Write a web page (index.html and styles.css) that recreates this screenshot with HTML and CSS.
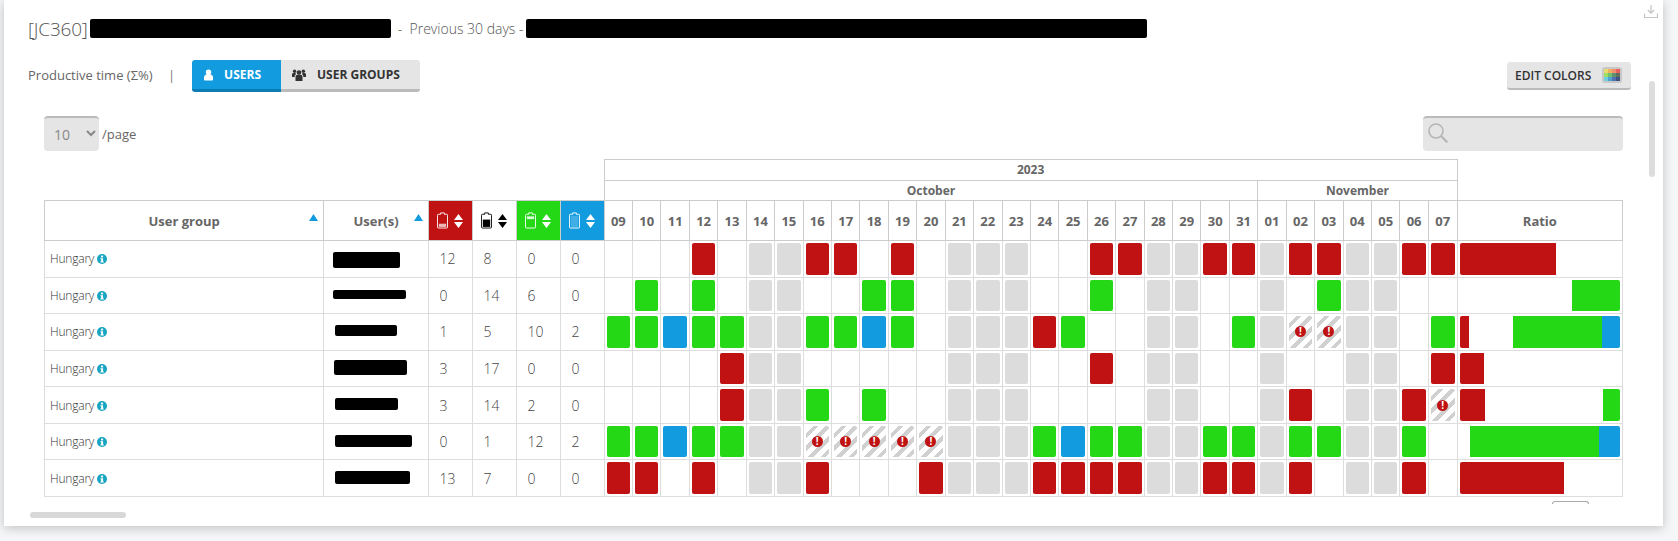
FILE: index.html
```html
<!DOCTYPE html>
<html lang="en">
  <head>
    <meta charset="UTF-8" />
    <title>Productive time</title>
    <link rel="stylesheet" href="styles.css">
  </head>
  <body>
    <svg class="defs" aria-hidden="true">
      <symbol id="info" viewBox="0 0 10 10">
        <circle cx="5" cy="5" r="5" fill="#17a5c2" />
        <rect x="4" y="1.6" width="2.1" height="1.8" fill="#fff" />
        <path d="M3.4 4.2h2.7v3.2h.7v1H3.4v-1h.7V5.200h-.7z" fill="#fff" />
      </symbol>
      <symbol id="sort" viewBox="0 0 9 14">
        <path d="M4.500 0L9 6H0zM4.500 14L0 8h9z" fill="currentColor" />
      </symbol>
      <symbol id="asc" viewBox="0 0 9 7">
        <path d="M4.500 0L9 7H0z" fill="#129cdf" />
      </symbol>
    </svg>

    <main class="card">
      <svg class="download" viewBox="0 0 14 13" aria-hidden="true">
        <path d="M7 0v8M3.800 5L7 8.200 10.200 5M.5 8.500v4h13v-4" fill="none" stroke="#c4c4c4" stroke-width="1.200" />
      </svg>
      <div class="vscroll"></div>

      <h1 class="title">
        <span class="code">[JC360]</span><span class="redact name"></span>
        <span class="period">- &nbsp;Previous 30 days -</span><span class="redact scope"></span>
      </h1>

      <div class="controls">
        <span class="metric">Productive time (&Sigma;%)</span>
        <span class="pipe">|</span>
        <div class="switch">
          <button class="tab active">
            <svg viewBox="0 0 10 12" aria-hidden="true"><path d="M5 0a3 3 0 0 1 3 3 3 3 0 0 1-1 2.400c2 .3 3 1.600 3 3.600v2a1 1 0 0 1-1 1H1a1 1 0 0 1-1-1V9c0-2 1-3.300 3-3.600A3 3 0 0 1 2 3a3 3 0 0 1 3-3z" fill="#fff" /></svg>
            USERS
          </button>
          <button class="tab">
            <svg viewBox="0 0 14 12" aria-hidden="true"><g fill="#333"><circle cx="7" cy="3.500" r="2.300" /><circle cx="2.600" cy="2.300" r="1.700" /><circle cx="11.400" cy="2.300" r="1.700" /><path d="M3.500 8c0-1.500 1-2.300 2-2.300h3c1 0 2 .8 2 2.300v4h-7zM0 5.500c0-1 .7-1.500 1.500-1.500h2L4 5.200C3 5.700 2.700 6.600 2.700 8H0zM14 5.500c0-1-.7-1.500-1.500-1.500h-2L10 5.200c1 .5 1.300 1.400 1.300 2.800H14z" /></g></svg>
            USER GROUPS
          </button>
        </div>
        <button class="edit-colors">
          EDIT COLORS
          <span class="palette">
            <i class="p1"></i><i class="p2"></i><i class="p3"></i><i class="p4"></i>
            <i class="p5"></i><i class="p6"></i><i class="p7"></i><i class="p8"></i>
            <i class="p9"></i><i class="p10"></i><i class="p11"></i><i class="p12"></i>
          </span>
        </button>
      </div>

      <div class="content">
        <div class="tools">
          <select class="page-size"><option>10</option></select>
          <span class="per-page">/page</span>
          <div class="search">
            <svg viewBox="0 0 20 20" aria-hidden="true"><circle cx="8" cy="8" r="7" fill="none" stroke="#b4b4b4" stroke-width="1.500" /><path d="M13 13l6.300 6.300" stroke="#b4b4b4" stroke-width="2" /></svg>
            <input type="text" aria-label="Search" />
          </div>
        </div>

        <table class="report">
          <colgroup>
            <col class="col-group" /><col class="col-user" />
            <col class="col-stat" /><col class="col-stat" /><col class="col-stat" /><col class="col-stat" />
            <col span="30" class="col-day" />
            <col class="col-ratio" />
          </colgroup>
          <thead>
            <tr class="head-small">
              <td colspan="6" class="blank"></td>
              <th colspan="30">2023</th>
              <td class="blank"></td>
            </tr>
            <tr class="head-small">
              <td colspan="6" class="blank"></td>
              <th colspan="23">October</th>
              <th colspan="7">November</th>
              <td class="blank"></td>
            </tr>
            <tr class="head-main">
              <th class="sortable">User group<svg class="asc"><use href="#asc" /></svg></th>
              <th class="sortable">User(s)<svg class="asc"><use href="#asc" /></svg></th>
              <th class="stat s-bad">
                <div class="stat-inner">
                  <svg class="battery" viewBox="0 0 12 18"><path d="M4 .7h4v1.500h2.500a1 1 0 0 1 1 1v13a1 1 0 0 1-1 1h-9a1 1 0 0 1-1-1v-13a1 1 0 0 1 1-1H4z" fill="none" stroke="currentColor" /><rect x="2" y="12.500" width="8" height="3.500" fill="currentColor" opacity=".7" /></svg>
                  <svg class="arrows"><use href="#sort" /></svg>
                </div>
              </th>
              <th class="stat s-low">
                <div class="stat-inner">
                  <svg class="battery" viewBox="0 0 12 18"><path d="M4 .7h4v1.500h2.500a1 1 0 0 1 1 1v13a1 1 0 0 1-1 1h-9a1 1 0 0 1-1-1v-13a1 1 0 0 1 1-1H4z" fill="none" stroke="currentColor" /><rect x="2" y="8" width="8" height="8" fill="currentColor" /></svg>
                  <svg class="arrows"><use href="#sort" /></svg>
                </div>
              </th>
              <th class="stat s-ok">
                <div class="stat-inner">
                  <svg class="battery" viewBox="0 0 12 18"><path d="M4 .7h4v1.500h2.500a1 1 0 0 1 1 1v13a1 1 0 0 1-1 1h-9a1 1 0 0 1-1-1v-13a1 1 0 0 1 1-1H4z" fill="none" stroke="currentColor" /><rect x="2" y="4.500" width="8" height="3" fill="currentColor" opacity=".85" /></svg>
                  <svg class="arrows"><use href="#sort" /></svg>
                </div>
              </th>
              <th class="stat s-over">
                <div class="stat-inner">
                  <svg class="battery" viewBox="0 0 12 18"><path d="M4 .7h4v1.500h2.500a1 1 0 0 1 1 1v13a1 1 0 0 1-1 1h-9a1 1 0 0 1-1-1v-13a1 1 0 0 1 1-1H4z" fill="none" stroke="currentColor" /><rect x="2" y="4" width="8" height="12" fill="currentColor" opacity=".2" /></svg>
                  <svg class="arrows"><use href="#sort" /></svg>
                </div>
              </th>
              <th>09</th><th>10</th><th>11</th><th>12</th><th>13</th><th>14</th><th>15</th><th>16</th><th>17</th><th>18</th>
              <th>19</th><th>20</th><th>21</th><th>22</th><th>23</th><th>24</th><th>25</th><th>26</th><th>27</th><th>28</th>
              <th>29</th><th>30</th><th>31</th><th>01</th><th>02</th><th>03</th><th>04</th><th>05</th><th>06</th><th>07</th>
              <th>Ratio</th>
            </tr>
          </thead>
          <tbody>
            <tr>
              <td class="group">Hungary <svg class="info"><use href="#info" /></svg></td>
              <td class="user"><span class="redact u1"></span></td>
              <td class="num">12</td><td class="num">8</td><td class="num">0</td><td class="num">0</td>
              <td></td><td></td><td></td><td class="bad"></td><td></td><td class="off"></td><td class="off"></td><td class="bad"></td><td class="bad"></td><td></td>
              <td class="bad"></td><td></td><td class="off"></td><td class="off"></td><td class="off"></td><td></td><td></td><td class="bad"></td><td class="bad"></td><td class="off"></td>
              <td class="off"></td><td class="bad"></td><td class="bad"></td><td class="off"></td><td class="bad"></td><td class="bad"></td><td class="off"></td><td class="off"></td><td class="bad"></td><td class="bad"></td>
              <td class="ratio-cell"><div class="ratio"><span class="seg-bad" style="flex-grow:12"></span><span style="flex-grow:8"></span></div></td>
            </tr>
            <tr>
              <td class="group">Hungary <svg class="info"><use href="#info" /></svg></td>
              <td class="user"><span class="redact u2"></span></td>
              <td class="num">0</td><td class="num">14</td><td class="num">6</td><td class="num">0</td>
              <td></td><td class="ok"></td><td></td><td class="ok"></td><td></td><td class="off"></td><td class="off"></td><td></td><td></td><td class="ok"></td>
              <td class="ok"></td><td></td><td class="off"></td><td class="off"></td><td class="off"></td><td></td><td></td><td class="ok"></td><td></td><td class="off"></td>
              <td class="off"></td><td></td><td></td><td class="off"></td><td></td><td class="ok"></td><td class="off"></td><td class="off"></td><td></td><td></td>
              <td class="ratio-cell"><div class="ratio"><span style="flex-grow:14"></span><span class="seg-ok" style="flex-grow:6"></span></div></td>
            </tr>
            <tr>
              <td class="group">Hungary <svg class="info"><use href="#info" /></svg></td>
              <td class="user"><span class="redact u3"></span></td>
              <td class="num">1</td><td class="num">5</td><td class="num">10</td><td class="num">2</td>
              <td class="ok"></td><td class="ok"></td><td class="over"></td><td class="ok"></td><td class="ok"></td><td class="off"></td><td class="off"></td><td class="ok"></td><td class="ok"></td><td class="over"></td>
              <td class="ok"></td><td></td><td class="off"></td><td class="off"></td><td class="off"></td><td class="bad"></td><td class="ok"></td><td></td><td></td><td class="off"></td>
              <td class="off"></td><td></td><td class="ok"></td><td class="off"></td><td><div class="missing"><b>!</b></div></td><td><div class="missing"><b>!</b></div></td><td class="off"></td><td class="off"></td><td></td><td class="ok"></td>
              <td class="ratio-cell"><div class="ratio"><span class="seg-bad" style="flex-grow:1"></span><span style="flex-grow:5"></span><span class="seg-ok" style="flex-grow:10"></span><span class="seg-over" style="flex-grow:2"></span></div></td>
            </tr>
            <tr>
              <td class="group">Hungary <svg class="info"><use href="#info" /></svg></td>
              <td class="user"><span class="redact u4"></span></td>
              <td class="num">3</td><td class="num">17</td><td class="num">0</td><td class="num">0</td>
              <td></td><td></td><td></td><td></td><td class="bad"></td><td class="off"></td><td class="off"></td><td></td><td></td><td></td>
              <td></td><td></td><td class="off"></td><td class="off"></td><td class="off"></td><td></td><td></td><td class="bad"></td><td></td><td class="off"></td>
              <td class="off"></td><td></td><td></td><td class="off"></td><td></td><td></td><td class="off"></td><td class="off"></td><td></td><td class="bad"></td>
              <td class="ratio-cell"><div class="ratio"><span class="seg-bad" style="flex-grow:3"></span><span style="flex-grow:17"></span></div></td>
            </tr>
            <tr>
              <td class="group">Hungary <svg class="info"><use href="#info" /></svg></td>
              <td class="user"><span class="redact u5"></span></td>
              <td class="num">3</td><td class="num">14</td><td class="num">2</td><td class="num">0</td>
              <td></td><td></td><td></td><td></td><td class="bad"></td><td class="off"></td><td class="off"></td><td class="ok"></td><td></td><td class="ok"></td>
              <td></td><td></td><td class="off"></td><td class="off"></td><td class="off"></td><td></td><td></td><td></td><td></td><td class="off"></td>
              <td class="off"></td><td></td><td></td><td class="off"></td><td class="bad"></td><td></td><td class="off"></td><td class="off"></td><td class="bad"></td><td><div class="missing"><b>!</b></div></td>
              <td class="ratio-cell"><div class="ratio"><span class="seg-bad" style="flex-grow:3"></span><span style="flex-grow:14"></span><span class="seg-ok" style="flex-grow:2"></span></div></td>
            </tr>
            <tr>
              <td class="group">Hungary <svg class="info"><use href="#info" /></svg></td>
              <td class="user"><span class="redact u6"></span></td>
              <td class="num">0</td><td class="num">1</td><td class="num">12</td><td class="num">2</td>
              <td class="ok"></td><td class="ok"></td><td class="over"></td><td class="ok"></td><td class="ok"></td><td class="off"></td><td class="off"></td><td><div class="missing"><b>!</b></div></td><td><div class="missing"><b>!</b></div></td><td><div class="missing"><b>!</b></div></td>
              <td><div class="missing"><b>!</b></div></td><td><div class="missing"><b>!</b></div></td><td class="off"></td><td class="off"></td><td class="off"></td><td class="ok"></td><td class="over"></td><td class="ok"></td><td class="ok"></td><td class="off"></td>
              <td class="off"></td><td class="ok"></td><td class="ok"></td><td class="off"></td><td class="ok"></td><td class="ok"></td><td class="off"></td><td class="off"></td><td class="ok"></td><td></td>
              <td class="ratio-cell"><div class="ratio"><span style="flex-grow:1"></span><span class="seg-ok" style="flex-grow:12"></span><span class="seg-over" style="flex-grow:2"></span></div></td>
            </tr>
            <tr>
              <td class="group">Hungary <svg class="info"><use href="#info" /></svg></td>
              <td class="user"><span class="redact u7"></span></td>
              <td class="num">13</td><td class="num">7</td><td class="num">0</td><td class="num">0</td>
              <td class="bad"></td><td class="bad"></td><td></td><td class="bad"></td><td></td><td class="off"></td><td class="off"></td><td class="bad"></td><td></td><td></td>
              <td></td><td class="bad"></td><td class="off"></td><td class="off"></td><td class="off"></td><td class="bad"></td><td class="bad"></td><td class="bad"></td><td class="bad"></td><td class="off"></td>
              <td class="off"></td><td class="bad"></td><td class="bad"></td><td class="off"></td><td class="bad"></td><td></td><td class="off"></td><td class="off"></td><td class="bad"></td><td></td>
              <td class="ratio-cell"><div class="ratio"><span class="seg-bad" style="flex-grow:13"></span><span style="flex-grow:7"></span></div></td>
            </tr>
          </tbody>
        </table>
        <div class="pager-stub"></div>
      </div>
      <div class="hscroll"></div>
    </main>
  </body>
</html>
```

FILE: styles.css
```css
html,
body {
  height: 100%;
}

body {
  margin: 0;
  background-color: #f5f6f8;
  color: #777;
  font-family: "Open Sans", sans-serif;
  overflow: hidden;
}

.defs {
  display: none;
}

/* Card */
.card {
  position: relative;
  box-sizing: border-box;
  width: 1659px;
  height: 526px;
  margin-left: 4px;
  padding-top: 19px;
  background-color: #fff;
  box-shadow: 0 2px 10px rgba(0, 0, 0, 0.22);
}

.download {
  position: absolute;
  top: 5px;
  right: 5px;
  width: 14px;
  height: 13px;
}

.vscroll {
  position: absolute;
  top: 81px;
  right: 8px;
  width: 6px;
  height: 96px;
  border-radius: 3px;
  background-color: #ddd;
}

.redact {
  display: block;
  border-radius: 2px;
  background-color: #000;
}

/* Title */
.title {
  display: flex;
  align-items: center;
  height: 19px;
  margin: 0 0 0 24px;
  font-weight: 300;
  font-size: 14px;
}

.code {
  font-size: 19px;
  letter-spacing: -0.2px;
  margin-right: 2px;
  color: #555;
}

.name {
  width: 301px;
  height: 19px;
  margin-right: 7px;
}

.period {
  margin-right: 2px;
  color: #555;
}

.scope {
  width: 621px;
  height: 19px;
}

/* Controls */
.controls {
  display: flex;
  align-items: flex-start;
  height: 32px;
  margin: 22px 32px 0 24px;
}

.metric {
  width: 124px;
  white-space: nowrap;
  font-size: 13px;
  line-height: 30px;
  color: #666;
}

.pipe {
  width: 40px;
  padding-left: 16px;
  box-sizing: border-box;
  font-size: 13px;
  line-height: 30px;
}

.switch {
  display: flex;
}

.tab {
  display: flex;
  align-items: center;
  height: 32px;
  padding: 0 20px 0 11px;
  border: none;
  border-bottom: 3px solid #bbb;
  background-color: #e5e5e5;
  color: #333;
  font-family: inherit;
  font-size: 12px;
  font-weight: 700;
}

.tab svg {
  width: 14px;
  height: 12px;
  margin-right: 11px;
}

.tab:first-child {
  border-radius: 3px 0 0 3px;
}

.tab:last-child {
  border-radius: 0 3px 3px 0;
}

.tab.active {
  width: 89px;
  padding-left: 12px;
  border-bottom-color: #0c7cb5;
  background-color: #129cdf;
  color: #fff;
}

.tab.active svg {
  width: 10px;
}

.edit-colors {
  display: flex;
  align-items: center;
  justify-content: space-between;
  box-sizing: border-box;
  width: 124px;
  height: 28px;
  margin: 2px 0 0 auto;
  padding: 0 9px 0 8px;
  border: none;
  border-bottom: 2px solid #bbb;
  border-radius: 3px;
  background-color: #e5e5e5;
  color: #333;
  font-family: inherit;
  font-size: 12px;
  font-weight: 600;
}

.palette {
  display: grid;
  grid-template-columns: repeat(4, 4px);
  grid-auto-rows: 4px;
  padding: 2px;
  border-radius: 3px;
  background-color: #c8c8c8;
}

.palette i { display: block; }
.p1 { background-color: #e8dc70; }
.p2 { background-color: #f0b060; }
.p3 { background-color: #f09070; }
.p4 { background-color: #e86060; }
.p5 { background-color: #a0e060; }
.p6 { background-color: #70c070; }
.p7 { background-color: #609070; }
.p8 { background-color: #607060; }
.p9 { background-color: #70d0e0; }
.p10 { background-color: #50a0d0; }
.p11 { background-color: #5070b0; }
.p12 { background-color: #405080; }

/* Content */
.content {
  margin: 0 40px;
}

.tools {
  display: flex;
  align-items: center;
  height: 35px;
  margin-top: 24px;
}

.page-size {
  box-sizing: border-box;
  width: 55px;
  height: 35px;
  padding-left: 6px;
  border: none;
  border-top: 2px solid #bbb;
  border-radius: 4px;
  background-color: #e5e5e5;
  color: #888;
  font-family: inherit;
  font-size: 14px;
}

.per-page {
  margin-left: 3px;
  font-size: 13px;
  color: #666;
}

.search {
  position: relative;
  margin-left: auto;
}

.search svg {
  position: absolute;
  top: 7px;
  left: 5px;
  width: 20px;
  height: 20px;
}

.search input {
  display: block;
  box-sizing: border-box;
  width: 200px;
  height: 35px;
  border: none;
  border-top: 2px solid #bbb;
  border-radius: 4px;
  background-color: #e5e5e5;
}

/* Table */
.report {
  table-layout: fixed;
  width: 1578px;
  margin-top: 8px;
  border-collapse: collapse;
  font-size: 13px;
}

.col-group { width: 279.4px; }
.col-user { width: 104.200px; }
.col-stat { width: 44px; }
.col-day { width: 28.430px; }
.col-ratio { width: 165.500px; }

.report th,
.report td {
  padding: 0;
  border: 1px solid #ddd;
}

.report th {
  border-color: #ccc;
  color: #666;
  font-weight: 700;
  text-align: center;
}

.report td.blank {
  border: none;
}

.head-small {
  height: 20.500px;
}

.report .head-small th {
  font-size: 12px;
}

.head-main {
  height: 40px;
}

.report tbody tr {
  height: 36.570px;
}

.sortable {
  position: relative;
}

.asc {
  position: absolute;
  top: 13px;
  right: 5px;
  width: 9px;
  height: 7px;
}

.stat-inner {
  display: flex;
  align-items: center;
  justify-content: center;
  gap: 6px;
}

.battery {
  width: 11px;
  height: 17px;
}

.arrows {
  width: 9px;
  height: 14px;
}

.report th.s-bad { background-color: #c01212; color: #fff; }
.report th.s-low { background-color: #fff; color: #000; }
.report th.s-ok { background-color: #24d815; color: #fff; }
.report th.s-over { background-color: #129cdf; color: #fff; }

.report td.group {
  padding-left: 5px;
  font-size: 12px;
  font-weight: 300;
  letter-spacing: -0.2px;
  color: #333;
}

.info {
  width: 10px;
  height: 10px;
  vertical-align: -1px;
}

.report td.user {
  padding-left: 9px;
}

.u1 { width: 67px; height: 16px; margin-top: 2px; }
.u2 { width: 73px; height: 9px; margin-top: -1px; }
.u3 { width: 62px; height: 11px; margin: -3px 0 0 2px; }
.u4 { width: 73px; height: 15px; margin: -1px 0 0 1px; }
.u5 { width: 63px; height: 12px; margin: -2px 0 0 2px; }
.u6 { width: 77px; height: 12px; margin: -1px 0 0 2px; }
.u7 { width: 75px; height: 13px; margin: -1px 0 0 2px; }

.report td.num {
  padding-left: 11px;
  font-size: 14px;
  font-weight: 300;
  color: #444;
}

/* Day cells */
.bad::before,
.ok::before,
.over::before,
.off::before,
.missing {
  display: block;
  box-sizing: border-box;
  height: 31.500px;
  margin: 0 2px;
  border-radius: 2px;
}

.bad::before,
.ok::before,
.over::before,
.off::before {
  content: "";
}

.bad::before { background-color: #c01212; }
.ok::before { background-color: #24d815; }
.over::before { background-color: #129cdf; }
.off::before { background-color: #dcdcdc; }

.missing {
  display: flex;
  align-items: center;
  justify-content: center;
  background: repeating-linear-gradient(135deg, #fff 0 5px, #d0d0d0 5px 9px);
}

.missing b {
  width: 11px;
  height: 11px;
  border-radius: 50%;
  background-color: #c01212;
  color: #fff;
  font-size: 10px;
  line-height: 11px;
  text-align: center;
}

/* Ratio */
.ratio {
  display: flex;
  height: 31.500px;
  margin: 0 2px;
  border-radius: 2px;
  overflow: hidden;
}

.ratio span {
  flex-basis: 0;
}

.seg-bad { background-color: #c01212; }
.seg-ok { background-color: #24d815; }
.seg-over { background-color: #129cdf; }

.pager-stub {
  width: 35px;
  height: 2px;
  margin: 4px 34px 0 auto;
  border: 1px solid #aaa;
  border-bottom: none;
  border-radius: 3px 3px 0 0;
}

.hscroll {
  width: 96px;
  height: 6px;
  margin: 8px 0 0 26px;
  border-radius: 3px;
  background-color: #d8d8d8;
}
```
